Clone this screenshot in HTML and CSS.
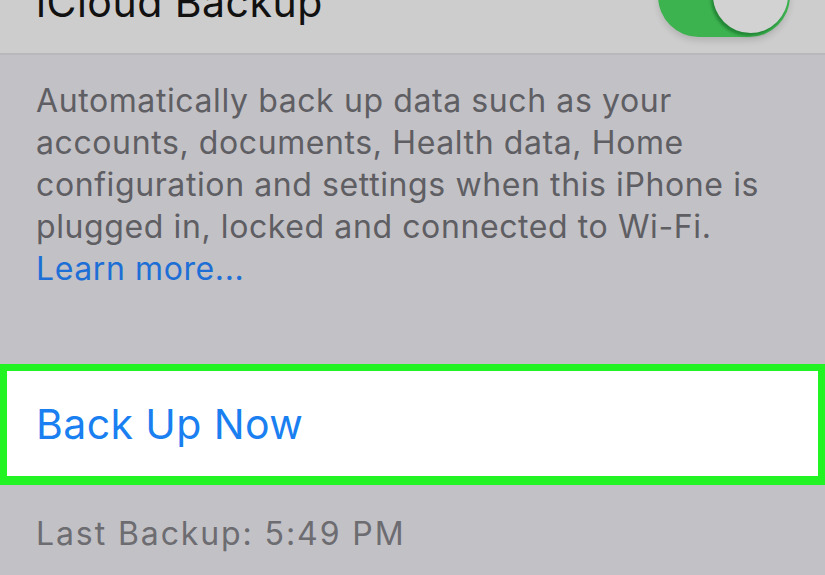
FILE: index.html
```html
<!DOCTYPE html>
<html>
<head>
<meta charset="utf-8">
<link rel="stylesheet" href="styles.css">
</head>
<body>
<div class="screen">
  <div class="cell-top">
    <span class="cell-title">iCloud Backup</span>
    <div class="toggle"><div class="knob"></div></div>
  </div>
  <div class="footer-note">
    <p class="note">Automatically back up data such as your accounts, documents, Health data, Home configuration and settings when this iPhone is plugged in, locked and connected to Wi-Fi.<br><span class="link">Learn more...</span></p>
  </div>
  <div class="highlight">
    <div class="action-cell">Back Up Now</div>
  </div>
  <div class="last">Last Backup: 5:49 PM</div>
</div>
</body>
</html>
```

FILE: styles.css
```css
html, body {
  margin: 0;
  padding: 0;
}
body {
  background: #c2c1c6;
  font-family: "Inter", "Liberation Sans", sans-serif;
}
.screen {
  width: 825px;
  height: 575px;
  overflow: hidden;
  display: flex;
  flex-direction: column;
}
.cell-top {
  height: 53px;
  background: #cdcdcd;
  border-bottom: 2px solid #b8b8ba;
  display: flex;
  justify-content: space-between;
  align-items: flex-start;
  padding: 0 35px 0 36px;
  overflow: hidden;
}
.cell-title {
  font-size: 41px;
  line-height: 40px;
  letter-spacing: 0.5px;
  color: #111;
  margin-top: -18px;
}
.toggle {
  width: 132px;
  height: 82px;
  margin-top: -45px;
  background: #3db350;
  border-radius: 41px;
  position: relative;
  box-shadow: 0 4px 6px rgba(0,0,0,0.12);
}
.knob {
  position: absolute;
  right: 2px;
  top: 3px;
  width: 75px;
  height: 75px;
  border-radius: 50%;
  background: #d2d2d2;
  box-shadow: -2px 3px 3px rgba(0,80,20,0.45);
}
.footer-note {
  padding: 25px 0 0 36px;
  height: 283px;
  box-sizing: border-box;
}
.note {
  margin: 0;
  width: 760px;
  font-size: 32px;
  line-height: 42px;
  letter-spacing: 0.6px;
  color: #5e5e63;
}
.link {
  color: #1d6fd6;
}
.highlight {
  margin-top: 26px;
  border: 7px solid #22f322;
  border-bottom-width: 9px;
  background: #fff;
  height: 105px;
  display: flex;
  align-items: center;
}
.action-cell {
  padding-left: 29px;
  font-size: 41px;
  letter-spacing: 0.4px;
  color: #1a7ff0;
}
.last {
  padding: 29px 36px 0;
  font-size: 32px;
  letter-spacing: 1.9px;
  color: #6c6c71;
}
```
